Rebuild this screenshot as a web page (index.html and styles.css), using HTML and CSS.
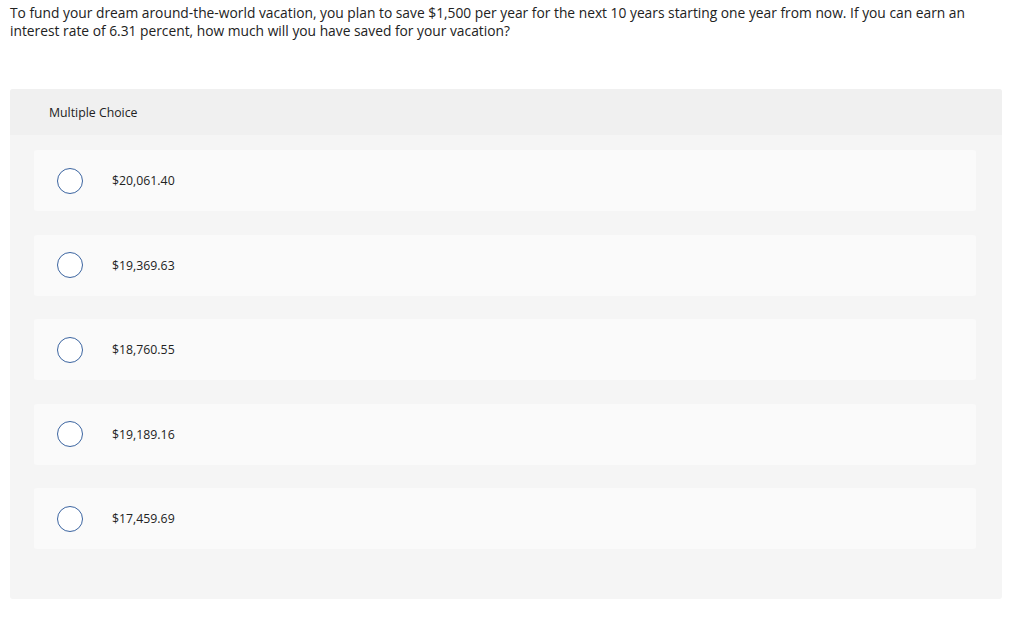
FILE: index.html
```html
<!DOCTYPE html>
<html>
<head>
<meta charset="utf-8">
<link rel="stylesheet" href="styles.css">
</head>
<body>
<p class="question">To fund your dream around-the-world vacation, you plan to save $1,500 per year for the next 10 years starting one year from now. If you can earn an interest rate of 6.31 percent, how much will you have saved for your vacation?</p>
<div class="panel">
  <div class="panel-header">Multiple Choice</div>
  <div class="panel-body">
    <div class="option"><span class="radio"></span><span class="label">$20,061.40</span></div>
    <div class="option"><span class="radio"></span><span class="label">$19,369.63</span></div>
    <div class="option"><span class="radio"></span><span class="label">$18,760.55</span></div>
    <div class="option"><span class="radio"></span><span class="label">$19,189.16</span></div>
    <div class="option"><span class="radio"></span><span class="label">$17,459.69</span></div>
  </div>
</div>
</body>
</html>
```
FILE: styles.css
```css
* { box-sizing: border-box; }
body {
  margin: 0;
  padding: 0 22px 0 10px;
  font-family: "Open Sans", "Liberation Sans", sans-serif;
  color: #222;
  background: #fff;
}
.question {
  margin: 4px 0 0 0;
  font-size: 13.8px;
  line-height: 18px;
}
.panel {
  margin-top: 49px;
  border-radius: 3px;
  background: #f5f5f5;
  overflow: hidden;
}
.panel-header {
  height: 46px;
  background: #f0f0f0;
  padding-left: 39px;
  display: flex;
  align-items: center;
  font-size: 12.3px;
}
.panel-body {
  padding: 15px 26px 50px 24px;
  display: flex;
  flex-direction: column;
  gap: 23.5px;
}
.option {
  height: 61px;
  background: #fafafa;
  border-radius: 3px;
  display: flex;
  align-items: center;
  padding-left: 23px;
}
.radio {
  width: 26px;
  height: 26px;
  border: 1px solid #3b64a0;
  border-radius: 50%;
  background: #fff;
  flex: none;
}
.label {
  margin-left: 29px;
  font-size: 12.3px;
}
```
